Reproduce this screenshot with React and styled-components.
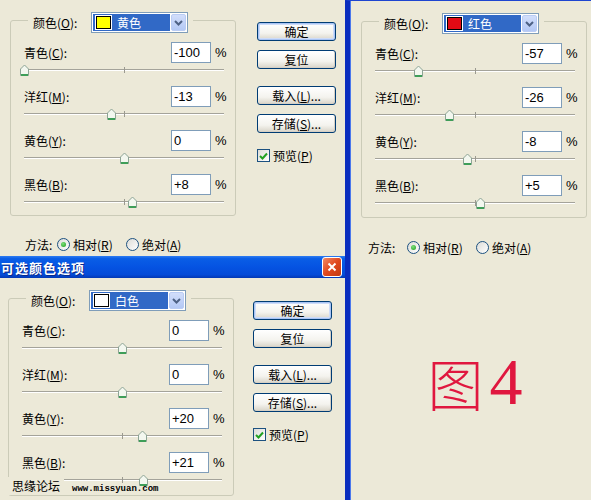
import React from 'react';
import styled, { createGlobalStyle } from 'styled-components';

const BG = '#ECE9D8';

const GlobalStyle = createGlobalStyle`
  html, body { margin: 0; padding: 0; background: ${BG}; }
  body {
    font-family: "Noto Sans CJK SC", "Liberation Sans", sans-serif;
    font-size: 12px;
    color: #000;
  }
`;

const Page = styled.div`
  width: 591px;
  height: 500px;
  overflow: hidden;
  display: grid;
  grid-template-columns: 345px 246px;
  background: ${BG};
`;

const LeftColumn = styled.div`
  display: grid;
  grid-template-rows: 256px 22px 222px;
  overflow: hidden;
`;

const RightColumn = styled.div`
  display: flex;
  flex-direction: column;
  border-left: 5px solid #0A2DBE;
  border-top: 1px solid #1E45D0;
  box-shadow: inset 1px 0 0 #4B78EC;
  overflow: hidden;
`;

const DialogBody = styled.div`
  position: relative;
  display: flex;
  flex-direction: column;
  height: ${(p) => p.$height}px;
  overflow: hidden;
  flex: none;
`;

const MainRow = styled.div`
  display: flex;
  align-items: flex-start;
  padding-left: ${(p) => p.$left}px;
`;

const GroupBox = styled.div`
  width: 226px;
  height: ${(p) => p.$height}px;
  box-sizing: border-box;
  margin-top: 20px;
  border: 1px solid #CBCBB8;
  border-radius: 3px;
  padding-left: 13px;
  flex: none;
`;

const Legend = styled.div`
  display: flex;
  align-items: center;
  gap: 6px;
  width: fit-content;
  height: 21px;
  margin: -9px 0 0 4px;
  padding: 0 5px;
  background: ${BG};
`;

const LegendLabel = styled.span`
  width: 52px;
  white-space: nowrap;
`;

const Combo = styled.div`
  width: 97px;
  height: 21px;
  box-sizing: border-box;
  border: 1px solid #7F9DB9;
  background: #fff;
  display: flex;
  padding: 1px;
`;

const ComboValue = styled.div`
  flex: 1;
  display: flex;
  align-items: center;
  gap: 6px;
  padding-left: 3px;
  background: #3169C6;
  color: #fff;
`;

const Swatch = styled.span`
  width: 15px;
  height: 13px;
  box-sizing: border-box;
  border: 1px solid #000;
  background: ${(p) => p.$color};
  box-shadow: 0 0 0 1px #fff;
`;

const ComboArrow = styled.div`
  width: 15px;
  margin-left: 1px;
  box-sizing: border-box;
  border: 1px solid #BACCF4;
  border-radius: 2px;
  background: linear-gradient(#D2DEFB, #B3C8F5);
  display: flex;
  align-items: center;
  justify-content: center;
`;

const Fields = styled.div`
  display: flex;
  flex-direction: column;
  gap: 3px;
  margin-top: 9px;
`;

const FieldRow = styled.div`
  display: grid;
  grid-template-columns: 147px 40px auto;
  align-items: center;
  height: 21px;
`;

const FieldLabel = styled.span`
  white-space: nowrap;
`;

const NumberBox = styled.div`
  width: 40px;
  height: 21px;
  box-sizing: border-box;
  border: 1px solid #7F9DB9;
  background: #fff;
  padding-left: 2px;
  font: 13px "Liberation Sans", Arial, sans-serif;
  line-height: 19px;
`;

const Percent = styled.span`
  margin-left: 4px;
  font: 13px "Liberation Sans", Arial, sans-serif;
`;

const SliderArea = styled.div`
  height: 20px;
  padding-top: 6px;
  box-sizing: border-box;
`;

const Track = styled.div`
  position: relative;
  width: 200px;
  height: 0;
  border-top: 1px solid #A4A39A;
  border-bottom: 1px solid #FFFFFF;
`;

const Tick = styled.span`
  position: absolute;
  left: 100px;
  top: -3px;
  width: 1px;
  height: 6px;
  background: #9A9990;
`;

const ThumbWrap = styled.span`
  position: absolute;
  top: -7px;
  width: 11px;
  height: 13px;
  display: block;
`;

const ButtonColumn = styled.div`
  display: flex;
  flex-direction: column;
  width: 79px;
  margin-left: ${(p) => p.$gap}px;
  padding-top: ${(p) => p.$top}px;
  flex: none;
`;

const Btn = styled.div`
  height: 19px;
  box-sizing: border-box;
  margin-top: ${(p) => p.$mt || 0}px;
  border: 1px solid #003C74;
  border-radius: 3px;
  background: linear-gradient(#FFFFFF 0%, #F4F3EE 60%, #D8D4C8 100%);
  box-shadow: ${(p) => (p.$default ? 'inset 0 0 0 1px #A9C4F4, inset 0 0 0 2px #CEDCF8' : 'inset -1px -1px 0 #D6D0C5')};
  display: flex;
  align-items: center;
  justify-content: center;
  white-space: nowrap;
`;

const CheckRow = styled.div`
  display: flex;
  align-items: center;
  gap: 3px;
  margin-top: 14px;
`;

const CheckBox = styled.span`
  width: 13px;
  height: 13px;
  box-sizing: border-box;
  border: 1px solid #1C5180;
  background: linear-gradient(135deg, #DCDCD7, #FFFFFF);
  display: flex;
  align-items: center;
  justify-content: center;
`;

const OptionText = styled.span`
  white-space: nowrap;
`;

const MethodRow = styled.div`
  display: grid;
  grid-template-columns: 57px 69px auto;
  align-items: center;
  height: 16px;
  margin-top: ${(p) => p.$mt}px;
`;

const MethodLabel = styled.span`
  padding-left: ${(p) => p.$pad}px;
`;

const RadioOption = styled.span`
  display: flex;
  align-items: center;
  gap: 3px;
  white-space: nowrap;
`;

const RadioCircle = styled.span`
  width: 13px;
  height: 13px;
  box-sizing: border-box;
  border-radius: 50%;
  border: 1px solid #1C5180;
  background: linear-gradient(135deg, #DCDCD7, #FFFFFF);
  display: flex;
  align-items: center;
  justify-content: center;
  &::after {
    content: '';
    display: ${(p) => (p.$checked ? 'block' : 'none')};
    width: 5px;
    height: 5px;
    border-radius: 50%;
    background: radial-gradient(circle at 40% 35%, #7BE07A, #1E9A1E);
  }
`;

const TitleBar = styled.div`
  display: flex;
  align-items: center;
  justify-content: space-between;
  padding: 0 3px 0 1px;
  background: linear-gradient(#2E7CF2 0%, #0A5EE6 12%, #0553E2 50%, #044BD8 85%, #0338B4 100%);
  color: #fff;
  font-weight: bold;
  font-size: 13px;
  letter-spacing: 1px;
  text-shadow: 1px 1px 0 #0A2A8A;
`;

const CloseButton = styled.span`
  width: 20px;
  height: 20px;
  box-sizing: border-box;
  border: 1px solid #fff;
  border-radius: 3px;
  background: linear-gradient(135deg, #F08A66, #E0481E 50%, #C23A12);
  display: flex;
  align-items: center;
  justify-content: center;
`;

const Watermark = styled.div`
  position: absolute;
  left: 4px;
  top: 199px;
  display: flex;
  align-items: center;
  gap: 8px;
  height: 18px;
`;

const WatermarkCn = styled.span`
  background: ${BG};
  padding: 0 4px 0 8px;
  font-size: 12px;
  line-height: 18px;
`;

const WatermarkUrl = styled.span`
  font: bold 9px "Liberation Mono", "DejaVu Sans Mono", monospace;
  margin-top: 5px;
`;

const FigureArea = styled.div`
  flex: 1;
  display: flex;
  align-items: center;
  justify-content: center;
  padding-left: 9px;
  color: #E0173F;
`;

const FigureCn = styled.span`
  font-family: "Noto Sans CJK SC", sans-serif;
  font-weight: 300;
  font-size: 56px;
  line-height: 1;
`;

const FigureNum = styled.span`
  font-family: "Liberation Serif", serif;
  font-size: 66px;
  line-height: 1;
  margin-left: 6px;
`;

const Chevron = () => (
  <svg width="9" height="6" viewBox="0 0 9 6">
    <path d="M1 1 L4.5 4.5 L8 1" fill="none" stroke="#4D6185" strokeWidth="2" />
  </svg>
);

const Thumb = ({ value }) => (
  <ThumbWrap style={{ left: `${value + 100 - 5}px` }}>
    <svg width="11" height="13" viewBox="0 0 11 13">
      <path d="M1.5 5 L5.5 1 L9.5 5 V11.5 H1.5 Z" fill="#F3F7EF" stroke="#8DA495" />
      <path d="M2 11 H9" stroke="#3E9E58" strokeWidth="2" />
    </svg>
  </ThumbWrap>
);

const CHANNELS = [
  { name: '青色', key: 'C' },
  { name: '洋红', key: 'M' },
  { name: '黄色', key: 'Y' },
  { name: '黑色', key: 'B' },
];

const fmt = (v) => (v > 0 ? `+${v}` : `${v}`);

function Selector({ swatch, colorName }) {
  return (
    <Legend>
      <LegendLabel>
        颜色(<u>O</u>):
      </LegendLabel>
      <Combo>
        <ComboValue>
          <Swatch $color={swatch} />
          <OptionText>{colorName}</OptionText>
        </ComboValue>
        <ComboArrow>
          <Chevron />
        </ComboArrow>
      </Combo>
    </Legend>
  );
}

function Group({ swatch, colorName, values, height }) {
  return (
    <GroupBox $height={height}>
      <Selector swatch={swatch} colorName={colorName} />
      <Fields>
        {CHANNELS.map((c, i) => (
          <div key={c.key}>
            <FieldRow>
              <FieldLabel>
                {c.name}(<u>{c.key}</u>):
              </FieldLabel>
              <NumberBox>{fmt(values[i])}</NumberBox>
              <Percent>%</Percent>
            </FieldRow>
            <SliderArea>
              <Track>
                <Tick />
                <Thumb value={values[i]} />
              </Track>
            </SliderArea>
          </div>
        ))}
      </Fields>
    </GroupBox>
  );
}

function Buttons({ gap, top }) {
  return (
    <ButtonColumn $gap={gap} $top={top}>
      <Btn $default>确定</Btn>
      <Btn $mt={9}>复位</Btn>
      <Btn $mt={17}>
        <OptionText>
          载入(<u>L</u>)...
        </OptionText>
      </Btn>
      <Btn $mt={9}>
        <OptionText>
          存储(<u>S</u>)...
        </OptionText>
      </Btn>
      <CheckRow>
        <CheckBox>
          <svg width="9" height="8" viewBox="0 0 9 8">
            <path d="M1 4 L3.5 6.5 L8 1.5" fill="none" stroke="#21A121" strokeWidth="2" />
          </svg>
        </CheckBox>
        <OptionText>
          预览(<u>P</u>)
        </OptionText>
      </CheckRow>
    </ButtonColumn>
  );
}

function Method({ mt, pad }) {
  return (
    <MethodRow $mt={mt}>
      <MethodLabel $pad={pad}>方法:</MethodLabel>
      <RadioOption>
        <RadioCircle $checked />
        <OptionText>
          相对(<u>R</u>)
        </OptionText>
      </RadioOption>
      <RadioOption>
        <RadioCircle />
        <OptionText>
          绝对(<u>A</u>)
        </OptionText>
      </RadioOption>
    </MethodRow>
  );
}

export default function App() {
  return (
    <>
      <GlobalStyle />
      <Page>
        <LeftColumn>
          <DialogBody $height={256}>
            <MainRow $left={10}>
              <Group swatch="#FFFF00" colorName="黄色" values={[-100, -13, 0, 8]} height={196} />
              <Buttons gap={21} top={22} />
            </MainRow>
            <Method mt={20} pad={25} />
          </DialogBody>
          <TitleBar>
            <span>可选颜色选项</span>
            <CloseButton>
              <svg width="10" height="10" viewBox="0 0 10 10">
                <path d="M1.5 1.5 L8.5 8.5 M8.5 1.5 L1.5 8.5" stroke="#fff" strokeWidth="2" />
              </svg>
            </CloseButton>
          </TitleBar>
          <DialogBody $height={222}>
            <MainRow $left={8}>
              <Group swatch="#FFFFFF" colorName="白色" values={[0, 0, 20, 21]} height={198} />
              <Buttons gap={19} top={23} />
            </MainRow>
            <Watermark>
              <WatermarkCn>思缘论坛</WatermarkCn>
              <WatermarkUrl>www.missyuan.com</WatermarkUrl>
            </Watermark>
          </DialogBody>
        </LeftColumn>
        <RightColumn>
          <DialogBody $height={262}>
            <MainRow $left={11}>
              <Group swatch="#E30A14" colorName="红色" values={[-57, -26, -8, 5]} height={197} />
            </MainRow>
            <Method mt={21} pad={18} />
          </DialogBody>
          <FigureArea>
            <FigureCn>图</FigureCn>
            <FigureNum>4</FigureNum>
          </FigureArea>
        </RightColumn>
      </Page>
    </>
  );
}
